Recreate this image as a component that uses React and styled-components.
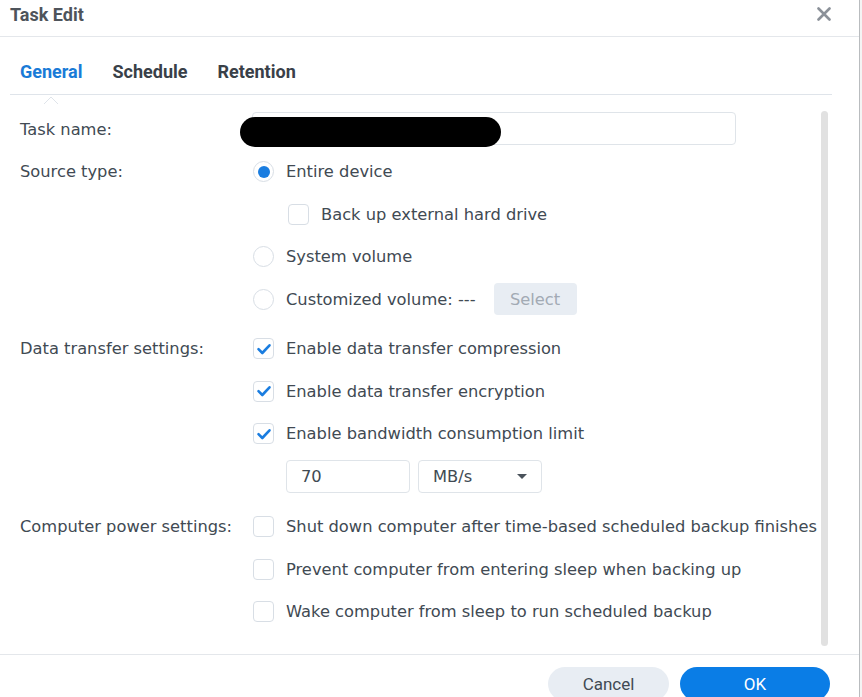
import React from "react"
import styled, { createGlobalStyle } from "styled-components"

const GlobalStyle = createGlobalStyle`
  html, body {
    margin: 0;
    padding: 0;
    background: #fff;
  }
  body {
    font-family: "DejaVu Sans", Verdana, sans-serif;
  }
`

const Page = styled.div`
  width: 862px;
  height: 697px;
  overflow: hidden;
  display: flex;
  background: #f4f4f4;
`

const Dialog = styled.div`
  width: 859px;
  height: 697px;
  background: #fff;
  border-right: 1px solid #b9bcbf;
  display: flex;
  flex-direction: column;
  flex-shrink: 0;
`

const Header = styled.div`
  height: 37px;
  border-bottom: 1px solid #e4e7eb;
  display: flex;
  align-items: center;
  justify-content: space-between;
  padding: 0 28px 0 10px;
  box-sizing: border-box;
`

const Title = styled.div`
  font-family: Roboto, "Liberation Sans", sans-serif;
  font-weight: 700;
  font-size: 18px;
  color: #4e545b;
  margin-top: -8px;
`

const Close = styled.div`
  width: 14px;
  height: 14px;
  margin-top: -9px;
  display: flex;
`

const Tabs = styled.div`
  margin: 0 27px 0 10px;
  height: 58px;
  border-bottom: 1px solid #dfe4ea;
  display: flex;
  align-items: flex-end;
  gap: 30px;
  padding: 0 0 0 10px;
  box-sizing: border-box;
`

const Tab = styled.div`
  font-family: Roboto, "Liberation Sans", sans-serif;
  font-weight: 700;
  font-size: 18px;
  line-height: 21px;
  color: ${p => (p.$active ? "#1a7bd7" : "#394048")};
  padding-bottom: 12px;
  position: relative;
`

const Notch = styled.span`
  position: absolute;
  left: 24px;
  bottom: -1px;
  width: 14px;
  height: 8px;
  display: block;
`

const Body = styled.div`
  flex: 1;
  display: flex;
  padding: 13px 31px 8px 20px;
  min-height: 0;
`

const Form = styled.div`
  flex: 1;
  display: flex;
  flex-direction: column;
`

const Scrollbar = styled.div`
  width: 9px;
  margin-left: 4px;
  margin-top: 3px;
  border-radius: 5px;
  background: #e1e1e1;
`

const Section = styled.div`
  display: grid;
  grid-template-columns: 232px 1fr;
  margin-bottom: ${p => p.$gap || 0}px;
`

const Label = styled.div`
  font-size: 16.3px;
  color: #414a53;
  height: 42.5px;
  display: flex;
  align-items: center;
  white-space: nowrap;
`

const Controls = styled.div`
  display: flex;
  flex-direction: column;
`

const Row = styled.div`
  height: 42.5px;
  display: flex;
  align-items: center;
  gap: 12px;
  padding-left: ${p => p.$indent || 0}px;
  white-space: nowrap;
  font-size: 16.3px;
  color: #414a53;
`

const TextInput = styled.div`
  position: relative;
  height: 33px;
  width: 484px;
  box-sizing: border-box;
  border: 1px solid #dfe4e9;
  border-radius: 4px;
  margin-top: -1px;
`

const Redaction = styled.div`
  position: absolute;
  left: -13px;
  top: 4px;
  width: 261px;
  height: 30px;
  background: #000;
  border-radius: 15px;
`

const RadioBox = styled.span`
  width: 21px;
  height: 21px;
  border-radius: 50%;
  border: 1px solid #d8dee5;
  box-sizing: border-box;
  display: flex;
  align-items: center;
  justify-content: center;
  flex-shrink: 0;
  margin-left: 1px;

  &::after {
    content: "";
    width: 12px;
    height: 12px;
    border-radius: 50%;
    background: ${p => (p.$checked ? "#1a7de0" : "transparent")};
  }
`

const CheckBox = styled.span`
  width: 21px;
  height: 21px;
  border-radius: 4px;
  border: 1px solid #d8dee5;
  box-sizing: border-box;
  display: flex;
  align-items: center;
  justify-content: center;
  flex-shrink: 0;
  margin-left: 1px;
`

const SelectButton = styled.div`
  margin-left: 6px;
  width: 83px;
  height: 32px;
  border-radius: 4px;
  background: #e8edf3;
  color: #a2aab4;
  display: flex;
  align-items: center;
  justify-content: center;
  font-size: 16.3px;
`

const Fields = styled.div`
  display: flex;
  gap: 8px;
  padding-left: 34px;
  height: 42.5px;
  align-items: center;
  margin-bottom: 8px;
`

const Field = styled.div`
  width: 124px;
  height: 33px;
  box-sizing: border-box;
  border: 1px solid #dfe4e9;
  border-radius: 4px;
  display: flex;
  align-items: center;
  justify-content: space-between;
  padding: 0 14px;
  font-size: 16.3px;
  color: #414a53;
`

const Caret = styled.span`
  width: 0;
  height: 0;
  border-left: 5px solid transparent;
  border-right: 5px solid transparent;
  border-top: 5px solid #4a525b;
`

const Footer = styled.div`
  height: 43px;
  border-top: 1px solid #e4e7eb;
  display: flex;
  justify-content: flex-end;
  align-items: flex-start;
  gap: 11px;
  padding: 12px 29px 0 0;
  box-sizing: border-box;
`

const Button = styled.div`
  width: ${p => p.$w}px;
  height: 34px;
  border-radius: 17px;
  flex-shrink: 0;
  display: flex;
  align-items: center;
  justify-content: center;
  font-family: Roboto, "Liberation Sans", sans-serif;
  font-size: 17px;
  background: ${p => (p.$primary ? "#0a7de6" : "#e8edf3")};
  color: ${p => (p.$primary ? "#fff" : "#414a53")};
`

const Check = () => (
  <svg width="16" height="16" viewBox="0 0 16 16">
    <path d="M2.5 8.2 L6.3 12 L13.5 4.3" fill="none" stroke="#1a7de0" strokeWidth="2.6" strokeLinecap="round" strokeLinejoin="round" />
  </svg>
)

const Checkbox = ({ checked }) => <CheckBox>{checked && <Check />}</CheckBox>

const App = () => (
  <>
    <GlobalStyle />
    <Page>
      <Dialog>
        <Header>
          <Title>Task Edit</Title>
          <Close>
            <svg width="14" height="14" viewBox="0 0 14 14">
              <path d="M1.5 1.5 L12.5 12.5 M12.5 1.5 L1.5 12.5" stroke="#8b9199" strokeWidth="2.6" strokeLinecap="round" />
            </svg>
          </Close>
        </Header>
        <Tabs>
          <Tab $active>
            General
            <Notch>
              <svg width="14" height="8" viewBox="0 0 14 8">
                <path d="M0 8 L7 1 L14 8" fill="#fff" stroke="#dfe4ea" strokeWidth="1" />
              </svg>
            </Notch>
          </Tab>
          <Tab>Schedule</Tab>
          <Tab>Retention</Tab>
        </Tabs>
        <Body>
          <Form>
            <Section>
              <Label>Task name:</Label>
              <Controls>
                <Row>
                  <TextInput>
                    <Redaction />
                  </TextInput>
                </Row>
              </Controls>
            </Section>
            <Section $gap={7}>
              <Label>Source type:</Label>
              <Controls>
                <Row><RadioBox $checked />Entire device</Row>
                <Row $indent={35}><Checkbox />Back up external hard drive</Row>
                <Row><RadioBox />System volume</Row>
                <Row>
                  <RadioBox />Customized volume: ---
                  <SelectButton>Select</SelectButton>
                </Row>
              </Controls>
            </Section>
            <Section>
              <Label>Data transfer settings:</Label>
              <Controls>
                <Row><Checkbox checked />Enable data transfer compression</Row>
                <Row><Checkbox checked />Enable data transfer encryption</Row>
                <Row><Checkbox checked />Enable bandwidth consumption limit</Row>
                <Fields>
                  <Field>70</Field>
                  <Field>MB/s<Caret /></Field>
                </Fields>
              </Controls>
            </Section>
            <Section>
              <Label>Computer power settings:</Label>
              <Controls>
                <Row><Checkbox />Shut down computer after time-based scheduled backup finishes</Row>
                <Row><Checkbox />Prevent computer from entering sleep when backing up</Row>
                <Row><Checkbox />Wake computer from sleep to run scheduled backup</Row>
              </Controls>
            </Section>
          </Form>
          <Scrollbar />
        </Body>
        <Footer>
          <Button $w={121}>Cancel</Button>
          <Button $w={150} $primary>OK</Button>
        </Footer>
      </Dialog>
    </Page>
  </>
)

export default App
